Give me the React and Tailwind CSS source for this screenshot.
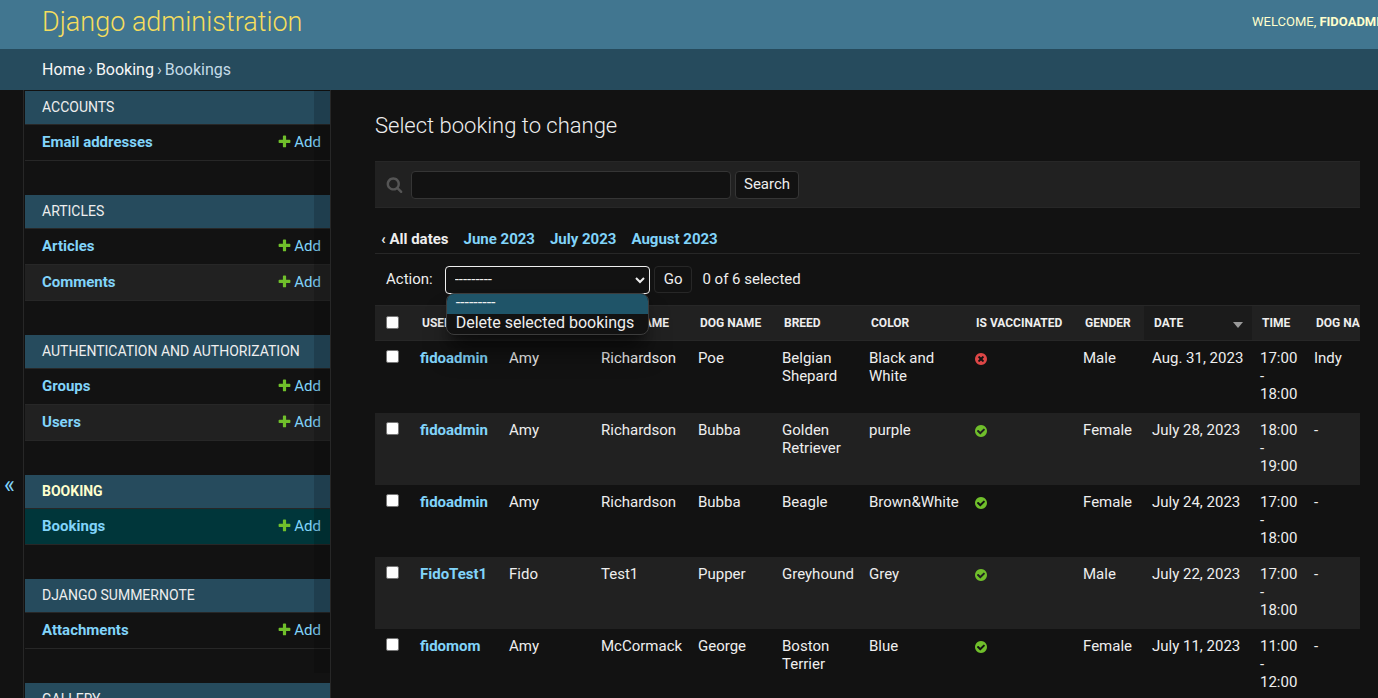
import React from "react";
import { clsx } from "clsx";

const modules = [
  { name: "Accounts", models: ["Email addresses"] },
  { name: "Articles", models: ["Articles", "Comments"] },
  { name: "Authentication and Authorization", models: ["Groups", "Users"] },
  { name: "Booking", models: ["Bookings"], current: true },
  { name: "Django Summernote", models: ["Attachments"] },
  { name: "Gallery", models: ["Images"] },
];

const columns = [
  { label: "User", width: "w-[89px]" },
  { label: "First name", width: "w-[92px]" },
  { label: "Last name", width: "w-[97px]" },
  { label: "Dog name", width: "w-[84px]" },
  { label: "Breed", width: "w-[87px]" },
  { label: "Color", width: "w-[105px]" },
  { label: "Is vaccinated", width: "w-[109px]" },
  { label: "Gender", width: "w-[69px]" },
  { label: "Date", width: "w-[108px]", sorted: true },
  { label: "Time", width: "w-[54px]" },
  { label: "Dog name", width: "w-[120px]" },
];

const bookings = [
  ["fidoadmin", "Amy", "Richardson", "Poe", "Belgian Shepard", "Black and White", false, "Male", "Aug. 31, 2023", "17:00 - 18:00", "Indy"],
  ["fidoadmin", "Amy", "Richardson", "Bubba", "Golden Retriever", "purple", true, "Female", "July 28, 2023", "18:00 - 19:00", "-"],
  ["fidoadmin", "Amy", "Richardson", "Bubba", "Beagle", "Brown&White", true, "Female", "July 24, 2023", "17:00 - 18:00", "-"],
  ["FidoTest1", "Fido", "Test1", "Pupper", "Greyhound", "Grey", true, "Male", "July 22, 2023", "17:00 - 18:00", "-"],
  ["fidomom", "Amy", "McCormack", "George", "Boston Terrier", "Blue", true, "Female", "July 11, 2023", "11:00 - 12:00", "-"],
];

function Glyph({ d, className, label }) {
  return (
    <svg viewBox="0 0 1792 1792" className={className} fill="currentColor" role="img" aria-label={label} aria-hidden={label ? undefined : true}>
      <path d={d} />
    </svg>
  );
}

const PLUS =
  "M1600 796v192q0 40-28 68t-68 28h-416v416q0 40-28 68t-68 28h-192q-40 0-68-28t-28-68v-416h-416q-40 0-68-28t-28-68v-192q0-40 28-68t68-28h416v-416q0-40 28-68t68-28h192q40 0 68 28t28 68v416h416q40 0 68 28t28 68z";
const LENS =
  "M1216 832q0-185-131.5-316.5t-316.5-131.5-316.5 131.5-131.5 316.5 131.5 316.5 316.5 131.5 316.5-131.5 131.5-316.5zm512 832q0 52-38 90t-90 38q-54 0-90-38l-343-342q-179 124-399 124-143 0-273.5-55.5t-225-150-150-225-55.5-273.5 55.5-273.5 150-225 225-150 273.5-55.5 273.5 55.5 225 150 150 225 55.5 273.5q0 220-124 399l343 343q37 37 37 90z";
const YES =
  "M1412 734q0-28-18-46l-91-90q-19-19-45-19t-45 19l-408 407-226-226q-19-19-45-19t-45 19l-91 90q-18 18-18 46 0 27 18 45l362 362q19 19 45 19 27 0 46-19l543-543q18-18 18-45zm252 162q0 209-103 385.5t-279.5 279.5-385.5 103-385.5-103-279.5-279.5-103-385.5 103-385.5 279.5-279.5 385.5-103 385.5 103 279.5 279.5 103 385.5z";
const NO =
  "M1277 1122q0-26-19-45l-181-181 181-181q19-19 19-45 0-27-19-46l-90-90q-19-19-46-19-26 0-45 19l-181 181-181-181q-19-19-45-19-27 0-46 19l-90 90q-19 19-19 46 0 26 19 45l181 181-181 181q-19 19-19 45 0 27 19 46l90 90q19 19 46 19 26 0 45-19l181-181 181 181q19 19 45 19 27 0 46-19l90-90q19-19 19-46zm387-226q0 209-103 385.5t-279.5 279.5-385.5 103-385.5-103-279.5-279.5-103-385.5 103-385.5 279.5-279.5 385.5-103 385.5 103 279.5 279.5 103 385.5z";

function Tick({ label }) {
  return (
    <input
      type="checkbox"
      aria-label={label}
      className="block size-[13px] appearance-none rounded-[2px] border border-[#767676] bg-white checked:bg-[#81d4fa]"
    />
  );
}

function Sidebar() {
  return (
    <div className="flex shrink-0">
      <button type="button" aria-label="Toggle navigation" className="w-6 border-r border-[#272727] pr-1 pt-[185px] text-center text-[23px] text-[#81d4fa]">
        «
      </button>
      <nav aria-label="Applications" className="relative w-[307px] border-r border-[#272727] pt-px">
        {modules.map((m) => (
          <section key={m.name} className="pb-[34px] pl-px">
            <h2
              className={clsx(
                "bg-[#264b5d] pl-[17px] text-sm/[33px] whitespace-nowrap uppercase",
                m.current ? "font-bold text-[#ffc]" : "font-normal text-[#eee]",
              )}
            >
              <a href="#">{m.name}</a>
            </h2>
            <ul className="border-t border-[#272727]">
              {m.models.map((model, i) => (
                <li
                  key={model}
                  className={clsx(
                    "flex h-9 items-center justify-between border-b border-[#272727] pr-[9px] pb-px pl-[17px] text-[15px] text-[#81d4fa]",
                    m.current ? "bg-[#00363a]" : i % 2 === 1 && "bg-[#212121]",
                  )}
                >
                  <a href="#" className="font-bold">{model}</a>
                  <a href="#" className="flex items-center gap-[2px]">
                    <Glyph d={PLUS} className="mb-[2px] size-[15px] text-[#70bf2b]" />
                    Add
                  </a>
                </li>
              ))}
            </ul>
          </section>
        ))}
        <div className="pointer-events-none absolute top-0 right-0 h-[583px] w-4 bg-black/16" />
      </nav>
    </div>
  );
}

function Actions() {
  return (
    <div className="flex h-[51px] items-center pl-[11px] text-[15px]">
      <label htmlFor="action" className="mr-3">Action:</label>
      <div className="relative mr-1">
        <select id="action" defaultValue="" className="block h-7 w-[205px] appearance-none rounded-sm border border-[#eee] bg-[#121212] px-[9px] text-[15px] text-[#eee] outline-none">
          <option value="">---------</option>
          <option value="delete">Delete selected bookings</option>
        </select>
        <svg viewBox="0 0 10 7" className="pointer-events-none absolute top-[11px] right-[5px] h-[7px] w-[10px]" fill="none" stroke="#eee" strokeWidth="2">
          <path d="M1 1l4 4 4-4" />
        </svg>
        <ul role="listbox" aria-label="Action choices" className="absolute top-[27px] left-px z-10 w-[203px] overflow-hidden rounded-lg border border-[#3c3c3c] bg-[#121212] text-base text-[#eee] shadow-xl shadow-black/50">
          <li role="option" aria-selected="true" className="h-5 bg-[#1f5468] px-[9px] leading-[18px]">---------</li>
          <li role="option" aria-selected="false" className="h-5 px-[9px] leading-[18px] whitespace-nowrap">Delete selected bookings</li>
        </ul>
      </div>
      <button type="button" className="mr-[10px] h-[27px] rounded-sm border border-[#272727] px-[9px]">Go</button>
      <span>0 of 6 selected</span>
    </div>
  );
}

function Results() {
  return (
    <div className="overflow-hidden">
      <table className="w-[1051px] table-fixed border-collapse text-left text-[15px]/[18px]">
        <thead>
          <tr className="h-[35px] bg-[#212121] text-xs font-bold uppercase">
            <th scope="col" className="w-[37px] border-y border-[#272727] pb-[2px] pl-[11px]">
              <Tick label="Select all bookings" />
            </th>
            {columns.map((c, i) => (
              <th key={i} scope="col" className={clsx("border-y border-[#272727] pl-[10px] whitespace-nowrap", c.width, c.sorted && "bg-[#1b1b1b]")}>
                <a href="#" className="flex items-center justify-between pr-[9px]">
                  {c.label}
                  {c.sorted && (
                    <svg viewBox="0 0 10 6" className="mt-1 h-[6px] w-[10px]" fill="#999">
                      <path d="M0 0h10L5 6z" />
                    </svg>
                  )}
                </a>
              </th>
            ))}
          </tr>
        </thead>
        <tbody>
          {bookings.map((row, i) => (
            <tr key={i} className={clsx("h-[72px] align-top", i % 2 === 1 && "bg-[#212121]")}>
              <td className="pt-[9px] pl-[11px]">
                <Tick label={"Select booking " + (i + 1)} />
              </td>
              {row.map((value, j) => (
                <td key={j} className="px-2 pt-2 pb-[9px]">
                  {j === 0 ? (
                    <a href="#" className="font-bold text-[#81d4fa]">{value}</a>
                  ) : typeof value === "boolean" ? (
                    <Glyph
                      d={value ? YES : NO}
                      label={value ? "True" : "False"}
                      className={clsx("mt-[3px] size-[14px]", value ? "text-[#70bf2b]" : "text-[#dd4646]")}
                    />
                  ) : (
                    value
                  )}
                </td>
              ))}
            </tr>
          ))}
        </tbody>
      </table>
    </div>
  );
}

export default function App() {
  return (
    <div className="flex h-screen flex-col overflow-hidden bg-[#121212] font-[Roboto,sans-serif] text-[#eee]">
      <header className="flex h-[49px] shrink-0 items-center justify-between bg-[#417690] pl-[42px]">
        <h1 className="pb-[5px] text-[27px] font-light text-[#f5dd5d]">
          <a href="#">Django administration</a>
        </h1>
        <div className="w-[126px] overflow-hidden pb-[6px] text-[13px] whitespace-nowrap text-[#ffc] uppercase">
          Welcome, <strong>fidoadmin</strong>
        </div>
      </header>
      <nav aria-label="Breadcrumbs" className="flex h-[41px] shrink-0 items-center gap-[3px] bg-[#264b5d] pl-[42px] text-base text-[#c4dce8]">
        <a href="#" className="text-[#f7f7f7]">Home</a>›
        <a href="#" className="text-[#f7f7f7]">Booking</a>›
        <span>Bookings</span>
      </nav>
      <div className="flex min-h-0 flex-1">
        <Sidebar />
        <main className="min-w-0 flex-1 pt-[22px] pr-[18px] pl-11">
          <h2 className="text-[22px]/[28px] font-light">Select booking to change</h2>
          <form onSubmit={(e) => e.preventDefault()} className="mt-[21px] flex h-[47px] items-center border-y border-[#272727] bg-[#212121] pl-[11px]">
            <label htmlFor="searchbar" className="mr-2">
              <Glyph d={LENS} label="Search" className="size-[17px] text-[#555]" />
            </label>
            <input id="searchbar" type="text" className="mr-1 h-7 w-80 rounded-sm border border-[#353535] bg-[#121212] px-2 text-[15px] outline-none" />
            <button type="submit" className="h-7 rounded-sm border border-[#353535] bg-[#121212] px-2 text-[15px]">Search</button>
          </form>
          <ul className="mt-[18px] flex h-7 gap-[15px] border-b border-[#272727] pl-[6px] text-[15px]/[26px] font-bold text-[#81d4fa]">
            <li className="text-[#eee]"><a href="#">‹ All dates</a></li>
            <li><a href="#">June 2023</a></li>
            <li><a href="#">July 2023</a></li>
            <li><a href="#">August 2023</a></li>
          </ul>
          <Actions />
          <Results />
        </main>
      </div>
    </div>
  );
}
